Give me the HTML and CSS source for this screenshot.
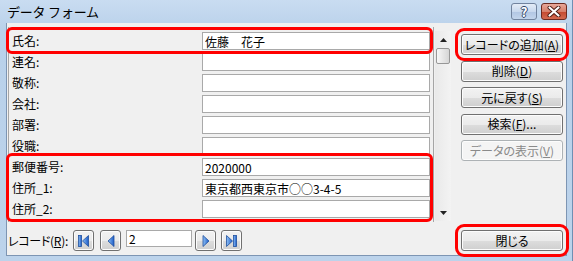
FILE: index.html
```html
<!DOCTYPE html>
<html lang="ja">
<head>
  <meta charset="UTF-8">
  <meta name="viewport" content="width=device-width, initial-scale=1.0">
  <title>データ フォーム</title>
  <link rel="stylesheet" href="styles.css">
</head>
<body>
  <div class="window">
    <div class="titlebar">
      <span class="title">データ フォーム</span>
      <div class="caption-btns">
        <button class="cap-btn help">?</button>
        <button class="cap-btn close">
          <svg width="14" height="11" viewBox="0 0 14 11">
            <path d="M2.5 1.5 L11.5 9.5 M11.5 1.5 L2.5 9.5" stroke="#4a1a12" stroke-width="4" stroke-linecap="round"/>
            <path d="M2.5 1.5 L11.5 9.5 M11.5 1.5 L2.5 9.5" stroke="#fff" stroke-width="2.2" stroke-linecap="round"/>
          </svg>
        </button>
      </div>
    </div>

    <div class="client">
      <div class="left">
        <div class="panel">
          <div class="fields">
            <div class="row mark"><span class="lbl">氏名:</span><input class="field" value="佐藤　花子"></div>
            <div class="row"><span class="lbl">連名:</span><input class="field"></div>
            <div class="row"><span class="lbl">敬称:</span><input class="field"></div>
            <div class="row"><span class="lbl">会社:</span><input class="field"></div>
            <div class="row"><span class="lbl">部署:</span><input class="field"></div>
            <div class="row"><span class="lbl">役職:</span><input class="field"></div>
            <div class="group mark">
              <div class="row"><span class="lbl">郵便番号:</span><input class="field" value="2020000"></div>
              <div class="row"><span class="lbl">住所_1:</span><input class="field" value="東京都西東京市○○3-4-5"></div>
              <div class="row"><span class="lbl">住所_2:</span><input class="field"></div>
            </div>
          </div>
          <div class="scrollbar">
            <div class="sb-arrow">
              <svg width="7" height="4" viewBox="0 0 7 4"><path d="M0 4 L3.5 0 L7 4 Z" fill="#222"/></svg>
            </div>
            <div class="sb-thumb"></div>
            <div class="sb-track"></div>
            <div class="sb-arrow">
              <svg width="7" height="4" viewBox="0 0 7 4"><path d="M0 0 L7 0 L3.5 4 Z" fill="#222"/></svg>
            </div>
          </div>
        </div>

        <div class="nav">
          <span class="nav-lbl">レコード(<u>R</u>):</span>
          <button class="nav-btn">
            <svg width="13" height="14" viewBox="0 0 13 14">
              <defs>
                <linearGradient id="gb" x1="0" y1="0" x2="1" y2="0">
                  <stop offset="0" stop-color="#8ec0f5"/>
                  <stop offset="1" stop-color="#1c5cc8"/>
                </linearGradient>
              </defs>
              <rect x="1.5" y="1.5" width="3" height="11" fill="url(#gb)" stroke="#1f4f9e" stroke-width="0.8"/>
              <path d="M11.5 1.5 L5.5 7 L11.5 12.5 Z" fill="url(#gb)" stroke="#1f4f9e" stroke-width="0.8"/>
            </svg>
          </button>
          <button class="nav-btn">
            <svg width="13" height="14" viewBox="0 0 13 14">
              <path d="M10 1.5 L4 7 L10 12.5 Z" fill="url(#gb)" stroke="#1f4f9e" stroke-width="0.8"/>
            </svg>
          </button>
          <input class="rec" value="2">
          <button class="nav-btn">
            <svg width="13" height="14" viewBox="0 0 13 14">
              <path d="M4 1.5 L10 7 L4 12.5 Z" fill="url(#gb)" stroke="#1f4f9e" stroke-width="0.8"/>
            </svg>
          </button>
          <button class="nav-btn">
            <svg width="13" height="14" viewBox="0 0 13 14">
              <path d="M1.5 1.5 L7.5 7 L1.5 12.5 Z" fill="url(#gb)" stroke="#1f4f9e" stroke-width="0.8"/>
              <rect x="8.5" y="1.5" width="3" height="11" fill="url(#gb)" stroke="#1f4f9e" stroke-width="0.8"/>
            </svg>
          </button>
        </div>
      </div>

      <div class="right">
        <div class="btns">
          <button class="btn mark-btn">レコードの追加(<u>A</u>)</button>
          <button class="btn">削除(<u>D</u>)</button>
          <button class="btn">元に戻す(<u>S</u>)</button>
          <button class="btn">検索(<u>F</u>)...</button>
          <button class="btn" disabled>データの表示(<u>V</u>)</button>
        </div>
        <button class="btn mark-btn">閉じる</button>
      </div>
    </div>
  </div>
</body>
</html>
```

FILE: styles.css
```css
*{box-sizing:border-box}
body{margin:0;width:573px;height:261px;overflow:hidden;font-family:"Noto Sans CJK JP","Noto Sans",sans-serif;font-size:12px;color:#000}
button{font:inherit;color:inherit;cursor:pointer;padding:0}
u{text-decoration:underline;text-underline-offset:1px}

/* window frame */
.window{width:573px;height:261px;display:flex;flex-direction:column;background:linear-gradient(#c9dcf1,#b9d1ea 30px,#bcd3eb);border-right:1px solid #6f8fb3}
.titlebar{height:23px;flex-shrink:0;display:flex;justify-content:space-between;align-items:flex-start;padding:0 5px 0 7px}
.title{font-size:13px;line-height:23px;letter-spacing:-.2px}
.caption-btns{display:flex;gap:4px;margin-top:3px}
.cap-btn{width:26px;height:17px;border-radius:3px;display:flex;align-items:center;justify-content:center}
.help{border:1px solid #71839e;background:linear-gradient(#e3ecf7,#c9d9ee 50%,#b1c6e3 51%,#c3d5ec);color:#fff;font-weight:bold;font-size:13px;line-height:1;text-shadow:1px 0 0 #344a6b,-1px 0 0 #344a6b,0 1px 0 #344a6b,0 -1px 0 #344a6b}
.close{border:1px solid #6b2a20;background:linear-gradient(#e8a89a,#d7806b 50%,#c4482f 51%,#d36a50)}

/* client area */
.client{flex:1;margin:0 5px 5px 6px;background:#f0f0f0;border:1px solid #7d95b3;border-top:none;display:flex;padding-top:4px}
.left{margin-left:1px;width:444px;display:flex;flex-direction:column}
.panel{height:195px;display:flex}
.fields{width:426px;border-left:1px solid #a5a5a5;border-right:1px solid #a5a5a5;padding:3px 0}
.row{width:421px;height:21px;display:flex;align-items:flex-start;padding:2px 0 0 3px}
.lbl{width:190px;line-height:17px}
.field{width:228px;height:18px;border:1px solid #a9a9a9;background:#fff;padding:0 2px;font:inherit;line-height:16px;outline:none}
.mark{position:relative;z-index:1;outline:3px solid #f00;border-radius:3px}
.group{width:421px}
.group .row{width:auto}

/* scrollbar */
.scrollbar{width:16px;margin:4px 0 1px 1px;display:flex;flex-direction:column;background:linear-gradient(to right,#e9e9e9,#f3f3f3)}
.sb-arrow{height:17px;display:flex;align-items:center;justify-content:center}
.sb-thumb{height:16px;margin:0 1px;border:1px solid #979797;border-radius:2px;background:linear-gradient(to right,#f7f7f7,#e6e6e6 50%,#d6d6d6)}
.sb-track{flex:1}

/* record navigation */
.nav{margin-top:8px;height:21px;display:flex;align-items:center}
.nav-lbl{width:65px;font-feature-settings:"palt";letter-spacing:-.3px}
.nav-btn{width:21px;height:21px;border:1px solid #707070;border-radius:3px;background:linear-gradient(#f2f2f2,#ebebeb 50%,#dddddd 51%,#cfcfcf);box-shadow:inset 0 0 0 1px #fcfcfc;display:flex;align-items:center;justify-content:center;margin-right:5px}
.nav-btn:first-of-type{margin-right:6px}
.rec{width:66px;height:17px;align-self:flex-start;margin-right:3px;border:1px solid #a9a9a9;background:#fff;padding:0 2px;font:inherit;line-height:15px;outline:none}

/* command buttons */
.right{padding:7px 0 4px 9px;display:flex;flex-direction:column;justify-content:space-between}
.btns{display:flex;flex-direction:column;gap:5.5px}
.btn{width:102px;height:21px;border:1px solid #707070;border-radius:3px;background:linear-gradient(#f2f2f2,#ebebeb 50%,#dddddd 51%,#cfcfcf);box-shadow:inset 0 0 0 1px #fcfcfc;font-feature-settings:"palt";line-height:18px}
.btn:disabled{border-color:#adb2b5;background:#f4f4f4;color:#8a8a8a;cursor:default}
.mark-btn{position:relative;z-index:1;outline:3px solid #f00;outline-offset:3px;border-radius:3px}
```
